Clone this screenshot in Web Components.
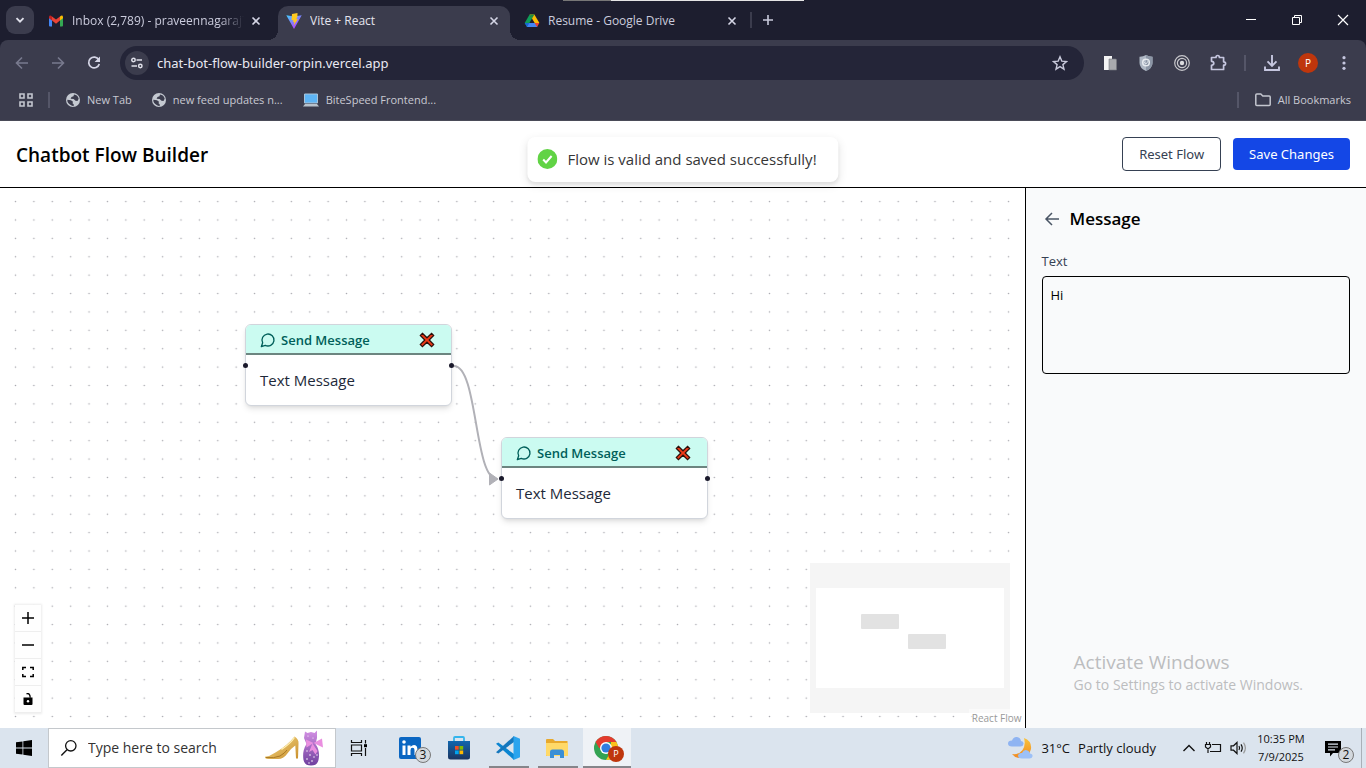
<!DOCTYPE html>
<html lang="en">
<head>
<meta charset="utf-8">
<meta name="viewport" content="width=device-width, initial-scale=1">
<title>Vite + React</title>
<style>
  html, body { margin: 0; height: 100%; }
  body { font-family: "Open Sans", "Noto Sans", sans-serif; font-size: 14px; line-height: 20px; overflow: hidden; }
</style>
</head>
<body>
<desktop-screen></desktop-screen>

<script>
const ICONS = {
  chevron: '<svg width="16" height="16" viewBox="0 0 16 16"><path d="M4.5 6.2 8 9.7l3.500-3.500" fill="none" stroke="#dfe0ea" stroke-width="1.900"/></svg>',
  gmail: '<svg width="16" height="16" viewBox="0 0 16 16"><path d="M1 4.500V12.500q0 1 1 1h2V7z" fill="#4285f4"/><path d="M15 4.500V12.500q0 1-1 1h-2V7z" fill="#34a853"/><path d="M12 3.500V7.500l3-2.200V4q-.3-2-2-1.200z" fill="#fbbc04"/><path d="M4 3.500v4L1 5.300V4q.3-2 2-1.200z" fill="#c5221f"/><path d="M4 3.400 8 6.500l4-3.100v4.200L8 10.700 4 7.600z" fill="#ea4335"/></svg>',
  vite: '<svg width="16" height="16" viewBox="0 0 16 16"><defs><linearGradient id="a" x1="0" y1="0" x2=".7" y2="1"><stop offset="0" stop-color="#41d1ff"/><stop offset="1" stop-color="#bd34fe"/></linearGradient></defs><path d="M.3 2.300 8 16 15.700 2.300 8 3.600z" fill="url(#a)"/><path d="m11.500 0-5.500 1.100-.5 6.200 1.900-.4-.5 2.200 1.500-.4-.8 3.800 4.400-6.500-1.700.3 1.100-2.600z" fill="#ffc920"/></svg>',
  drive: '<svg width="16" height="16" viewBox="0 0 16 16"><path d="M5.600 1.500h4.800L15.400 10h-4.700z" fill="#fbbc04"/><path d="M5.600 1.500 .7 10l2.300 4L8 5.600z" fill="#0f9d58"/><path d="M5.600 1.500h4.800L8 5.600z" fill="#1e8e3e"/><path d="M3.300 10h7.900l2.300 4H3z" fill="#4285f4"/><path d="M.7 10h4.700L3 14z" fill="#1967d2"/><path d="M10.600 10h4.800L13 14z" fill="#ea4335"/></svg>',
  close: '<svg width="16" height="16" viewBox="0 0 16 16"><path d="m4.500 4.500 7 7m0-7-7 7" stroke="#d5d6e6" stroke-width="1.600"/></svg>',
  plus: '<svg width="16" height="16" viewBox="0 0 16 16"><path d="M8 3v10M3 8h10" stroke="#c9cadb" stroke-width="1.600"/></svg>',
  min: '<svg width="12" height="12" viewBox="0 0 12 12"><path d="M1 5.500h10" stroke="#fff"/></svg>',
  restore: '<svg width="12" height="12" viewBox="0 0 12 12"><path d="M1.500 3.500h7v7h-7zM3.500 3V1.500h7v7H9" fill="none" stroke="#fff"/></svg>',
  winclose: '<svg width="12" height="12" viewBox="0 0 12 12"><path d="m1 1 10 10m0-10L1 11" stroke="#fff" stroke-width="1.200"/></svg>',
  back: '<svg width="16" height="16" viewBox="0 0 16 16"><path d="M14 8H3m5-5.500L2.500 8 8 13.500" fill="none" stroke="#787a8e" stroke-width="1.600"/></svg>',
  forward: '<svg width="16" height="16" viewBox="0 0 16 16"><path d="M2 8h11M8 2.500 13.500 8 8 13.500" fill="none" stroke="#787a8e" stroke-width="1.600"/></svg>',
  reload: '<svg width="16" height="16" viewBox="0 0 16 16"><path d="M12.800 4.800A5.400 5.400 0 1 0 13.300 9" fill="none" stroke="#d5d6e6" stroke-width="1.700"/><path d="M14 1.500V7H8.600z" fill="#d5d6e6"/></svg>',
  tune: '<svg width="16" height="16" viewBox="0 0 16 16"><g fill="none" stroke="#dfe0ea" stroke-width="1.500"><circle cx="4.500" cy="5" r="1.700"/><path d="M7.500 5H13M2.500 11H8"/><circle cx="11.300" cy="11" r="1.700"/></g></svg>',
  star: '<svg width="16" height="16" viewBox="0 0 16 16"><path d="m8 1.800 1.800 4.300 4.700.4-3.600 3.100 1.100 4.600L8 11.700l-4 2.500 1.100-4.600L1.500 6.500l4.700-.4z" fill="none" stroke="#c9cadb" stroke-width="1.400"/></svg>',
  pages: '<svg width="16" height="16" viewBox="0 0 16 16"><path d="M2 1h8v14H2z" fill="#f4f4f4"/><path d="M7 4h6.500q1 0 1 1v10H7z" fill="#a9aaae" stroke="#77787f" stroke-width=".6"/></svg>',
  shield: '<svg width="16" height="16" viewBox="0 0 16 16"><path d="M8 0q3 1.800 6.500 1.700V8q0 5-6.500 8-6.500-3-6.500-8V1.700Q5 1.800 8 0z" fill="#aeb7c4"/><path d="M8 0q3 1.800 6.500 1.700V8q0 5-6.500 8z" fill="#8c96a6"/><circle cx="8" cy="7.500" r="3.300" fill="none" stroke="#e7ebf0" stroke-width="1.500"/><path d="m6 7 2 2 3-4" fill="none" stroke="#d5dbe3"/></svg>',
  target: '<svg width="16" height="16" viewBox="0 0 16 16"><g fill="none" stroke="#c8c8cc" stroke-width="1.200"><circle cx="8" cy="8" r="7.300"/><circle cx="8" cy="8" r="4.600"/></g><circle cx="8" cy="8" r="2.200" fill="#dcdcdf"/></svg>',
  puzzle: '<svg width="18" height="18" viewBox="0 0 18 18"><path d="M2.500 3.500H7q0-2 1.700-2t1.700 2h4.200v4.300q2 0 2 1.700t-2 1.700v4.300H2.500v-4.200q2.300-.2 2.300-2t-2.300-2z" fill="none" stroke="#c5c6df" stroke-width="1.700" stroke-linejoin="round"/></svg>',
  download: '<svg width="18" height="18" viewBox="0 0 18 18"><path d="M9 1v10.500M4.500 7.300 9 11.800l4.500-4.500M2 12.500V16h14v-3.500" fill="none" stroke="#c5c6df" stroke-width="1.900"/></svg>',
  dots: '<svg width="16" height="16" viewBox="0 0 16 16" fill="#c5c6df"><circle cx="8" cy="2.700" r="1.600"/><circle cx="8" cy="8" r="1.600"/><circle cx="8" cy="13.300" r="1.600"/></svg>',
  apps: '<svg width="16" height="16" viewBox="0 0 16 16" fill="none" stroke="#c4c6cf" stroke-width="1.600"><path d="M2 2h4v4H2zM10 2h4v4h-4zM2 10h4v4H2zM10 10h4v4h-4z"/></svg>',
  globe: '<svg width="14" height="14" viewBox="0 0 14 14"><circle cx="7" cy="7" r="7" fill="#c4c9d1"/><path d="M1.300 6.800 5 7.200l2 1.500-.5 1.500 1.200 1v2L5.500 12.500Q1 10.500 1.300 6.800zM8 1.500q4 .6 4.700 4.300L11.500 8l-2-.3L7.600 6 4.600 5.800 5.500 4l2-.8z" fill="#3b3c4d"/></svg>',
  laptop: '<svg width="16" height="14" viewBox="0 0 16 14"><path d="M1.500 1h13v9h-13z" fill="#5db4f5" stroke="#a9c3d8"/><path d="M2 11h12l2 2.500H0z" fill="#b8c2cc"/></svg>',
  folder: '<svg width="16" height="14" viewBox="0 0 16 14"><path d="M.8 2q0-1 1-1h4l2 2h6.400q1 0 1 1v7.500q0 1-1 1H1.800q-1 0-1-1z" fill="none" stroke="#c4c6cf" stroke-width="1.500"/></svg>',
  check: '<svg width="20" height="20" viewBox="0 0 20 20"><circle cx="10" cy="10" r="10" fill="#61d345"/><path d="m5.800 10.500 2.800 3 5.600-6.500" fill="none" stroke="#fff" stroke-width="2"/></svg>',
  arrow: '<svg width="16" height="16" viewBox="0 0 16 16"><path d="M15 8H2m6-6L2 8l6 6" fill="none" stroke="#4a5565" stroke-width="1.500"/></svg>',
  bubble: '<svg width="16" height="16" viewBox="0 0 24 24"><path d="M7.900 20A9 9 0 1 0 4 16.100L2 22z" fill="none" stroke="#005f5a" stroke-width="2" stroke-linecap="round" stroke-linejoin="round"/></svg>',
  cross: '<svg width="16" height="16" viewBox="0 0 16 16"><path d="m3.400 1.300 4.600 4.500 4.600-4.500 2.100 2.100L10.200 8l4.500 4.600-2.100 2.100L8 10.200l-4.600 4.500-2.100-2.100L5.800 8 1.300 3.400z" fill="#f03a17" stroke="#2b0f0a" stroke-width="1.200"/></svg>',
  zoomin: '<svg width="12" height="12" viewBox="0 0 12 12"><path d="M6 0v12M0 6h12" stroke="#000" stroke-width="1.500"/></svg>',
  zoomout: '<svg width="12" height="12" viewBox="0 0 12 12"><path d="M0 6h12" stroke="#000" stroke-width="1.500"/></svg>',
  fit: '<svg width="12" height="12" viewBox="0 0 12 12"><path d="M4 1.500H.8v2.500M8 1.500h3.200v2.500M4 10.500H.8V8M8 10.500h3.200V8" fill="none" stroke="#000" stroke-width="1.500"/></svg>',
  lock: '<svg width="12" height="12" viewBox="0 0 12 12"><path d="M1.500 4.500h9V11q0 1-1 1h-7q-1 0-1-1z" fill="#000"/><circle cx="6" cy="8.200" r="1.200" fill="#fff"/><path d="M4.500.8q3.600-1.200 3.700 4" fill="none" stroke="#000" stroke-width="1.300"/></svg>',
  windows: '<svg width="16" height="16" viewBox="0 0 16 16"><path d="M0 2.300 6.500 1.400v6.200H0zM7.300 1.300 16 0v7.600H7.300zM0 8.400h6.500v6.200L0 13.700zM7.300 8.400H16V16l-8.700-1.300z"/></svg>',
  search: '<svg width="18" height="18" viewBox="0 0 18 18"><circle cx="10.800" cy="6.800" r="5.200" fill="none" stroke="#111" stroke-width="1.300"/><path d="M7 10.700 1.300 16.500" stroke="#111" stroke-width="1.400"/></svg>',
  shoe: '<svg width="36" height="26" viewBox="0 0 36 26"><defs><linearGradient id="g" x1="0" y1="0" x2="1" y2="1"><stop offset="0" stop-color="#f6dc8a"/><stop offset="1" stop-color="#c98f2c"/></linearGradient></defs><path d="M30.500 1.500q4.500 3 4 7L34 23.500h-2l-.7-13Q26 14 23 19q-3.500 5-9 5H4Q.5 23.800 1 21.800q5-.5 10-4Q23 11 30.500 1.500z" fill="url(#g)"/><path d="M2 22.500q8 1 14-1.500 5-3 7-6" fill="none" stroke="#9b6b19" stroke-width=".8"/><path d="M30.500 2.500q-4 6-13 12" fill="none" stroke="#fff2b8" stroke-width="1.200"/></svg>',
  dress: '<svg width="22" height="36" viewBox="0 0 22 36"><defs><linearGradient id="d" x2="0" y2="1"><stop offset="0" stop-color="#d491e4"/><stop offset="1" stop-color="#6e3f9e"/></linearGradient></defs><path d="M3 1.500 5.500 3 9 2l3.500 1L15 .5V8l-1.500 6q5 7 3 16-1 5.500-7.500 5.500T1.500 30Q0 21 4.500 14L2 8z" fill="url(#d)"/><path d="M11.500 13 4 9.500l.5 8zM11.500 13 20 8.500l1 9zM10.500 13.500 7 22l3.500-2 3 4.500 2-3.500z" fill="#ea8fe0"/><g fill="#fff"><circle cx="6" cy="6" r=".6"/><circle cx="11" cy="8" r=".6"/><circle cx="5" cy="21" r=".7"/><circle cx="8" cy="25" r=".8"/><circle cx="12" cy="27" r=".7"/><circle cx="5" cy="29" r=".8"/><circle cx="10" cy="31" r=".8"/><circle cx="15" cy="25" r=".7"/><circle cx="7" cy="33" r=".7"/></g></svg>',
  taskview: '<svg width="18" height="16" viewBox="0 0 18 16"><path d="M1.500 0v2.500h10V0M1.500 16v-2.500h10V16M1.500 5h10v6h-10z" fill="none" stroke="#111" stroke-width="1.200"/><path d="M15.500 0v3.500M15.500 8v8" stroke="#111" stroke-width="1.200"/><path d="M14 4.200h3v3h-3z"/></svg>',
  linkedin: '<svg width="22" height="22" viewBox="0 0 22 22"><rect width="22" height="22" rx="2" fill="#0a66c2"/><g fill="#fff"><path d="M3.500 8.500h3V18h-3zM8.500 8.500h3v1.300Q15 6.500 17.800 9.500q.8 1 .7 8.500h-3v-5q0-2.200-2-2.200t-2 2.400V18h-3z"/><circle cx="5" cy="5" r="1.800"/></g></svg>',
  store: '<svg width="24" height="24" viewBox="0 0 24 24"><defs><linearGradient id="s" x2="0" y2="1"><stop offset="0" stop-color="#1166ae"/><stop offset="1" stop-color="#1b3561"/></linearGradient></defs><path d="M7 6V2q0-1 1-1h8q1 0 1 1v4" fill="none" stroke="#35b5ec" stroke-width="1.800"/><path d="M1 5h22v16q0 2.500-2.500 2.500h-17Q1 23.500 1 21z" fill="url(#s)"/><path d="M8 10h3.700v3.700H8z" fill="#f25022"/><path d="M12.500 10h3.700v3.700h-3.700z" fill="#7fba00"/><path d="M8 14.500h3.700v3.700H8z" fill="#00a4ef"/><path d="M12.500 14.500h3.700v3.700h-3.700z" fill="#ffb900"/></svg>',
  vscode: '<svg width="24" height="24" viewBox="0 0 24 24"><path d="M0 7.800 2.300 6.600 18 18v6z" fill="#0b85d1"/><path d="m0 16.200 2.300 1.200L18 6V0z" fill="#1577bd"/><path d="M17.500 0 24 2.800v18.400L17.500 24z" fill="#2ba4ee"/></svg>',
  explorer: '<svg width="22" height="20" viewBox="0 0 22 20"><path d="M0 2q0-1 1-1h6l2 2h12.500v15H0z" fill="#e8a92d"/><path d="M0 5h22v12q0 1-1 1H1q-1 0-1-1z" fill="#ffd968"/><path d="M4 20v-6q0-2.500 2.500-2.500h9q2.500 0 2.500 2.500v6h-4v-3H8v3z" fill="#3a8fd6"/></svg>',
  chrome: '<svg width="24" height="24" viewBox="0 0 24 24"><circle cx="12" cy="12" r="12" fill="#34a353"/><path d="M1.600 6A12 12 0 0 1 22.400 6H12v6H5.100z" fill="#e33b2e"/><path d="M22.400 6A12 12 0 0 1 12 24l5-9V6z" fill="#fcc21b"/><circle cx="12" cy="12" r="6" fill="#fff"/><circle cx="12" cy="12" r="4.600" fill="#2f7de1"/></svg>',
  weather: '<svg width="26" height="24" viewBox="0 0 26 24"><defs><linearGradient id="m" x2="0" y2="1"><stop offset="0" stop-color="#f9c33c"/><stop offset="1" stop-color="#f08a24"/></linearGradient></defs><path d="M16 2q8 3 7 11-2 9-11 9-5 0-8-4 7 1 10.500-4T16 2z" fill="url(#m)"/><path d="M4 10.500q-4 0-4-3T4 4.500Q5.500.5 9 1t4 4q3 .5 2.500 3-.5 2.500-3 2.500z" fill="#8fb4f2"/><path d="M14 22.500q-4 0-4-3 .5-3 4-2.500 2-4 5.500-2.500 2.300 1 2.500 3 3 .5 2.500 3-.5 2-3 2z" fill="#9cc0f7"/></svg>',
  caret: '<svg width="14" height="8" viewBox="0 0 14 8"><path d="m1.500 7 5.500-5.500L12.500 7" fill="none" stroke="#111" stroke-width="1.400"/></svg>',
  power: '<svg width="18" height="14" viewBox="0 0 18 14"><path d="M8 3.500h8.500v7H6M2.500 1v2M5.500 1v2M1.500 3.500h5V6L4 8 1.500 6zM4 8v4" fill="none" stroke="#111" stroke-width="1.200"/></svg>',
  sound: '<svg width="18" height="14" viewBox="0 0 18 14"><path d="M1 4.800h2.500L7 1.500v11L3.500 9.200H1z" fill="none" stroke="#111" stroke-width="1.200"/><path d="M9 5q1.200 2 0 4M11 3.300q2.500 3.700 0 7.400" fill="none" stroke="#111" stroke-width="1.200"/><path d="M13.500 1.700q3.800 5.300 0 10.600" fill="none" stroke="#999" stroke-width="1.200"/></svg>',
  notes: '<svg width="17" height="17" viewBox="0 0 17 17"><path d="M0 1h16v12H8l-3 3.500V13H0z"/><path d="M3 4.200h10M3 7h10M3 9.800h7" stroke="#dbe4ee" stroke-width="1.200"/></svg>'
};

class UiIcon extends HTMLElement {
  connectedCallback() {
    if (this.shadowRoot) return;
    this.attachShadow({ mode: "open" }).innerHTML =
      `<style>:host{display:inline-flex;flex:none}svg{display:block}</style>${ICONS[this.getAttribute("name")] || ""}`;
  }
}
customElements.define("ui-icon", UiIcon);

const RESET = "*{box-sizing:border-box}button,input,textarea{font:inherit;color:inherit;margin:0;padding:0;border:0;background:none;outline:0}button{display:flex;align-items:center;justify-content:center}a{color:inherit;text-decoration:none}:host{box-sizing:border-box}";

function define(name, styles, markup) {
  const template = document.createElement("template");
  template.innerHTML = `<style>${RESET}${styles}</style>${markup}`;
  customElements.define(name, class extends HTMLElement {
    constructor() {
      super();
      this.attachShadow({ mode: "open" }).append(template.content.cloneNode(true));
    }
  });
}

define("browser-tab", `
  :host{display:flex;position:relative;width:232px;height:34px;align-items:center;gap:8px;padding:0 8px 4px;color:#cbccdd;border-radius:10px 10px 0 0;font-size:12px;line-height:20px}
  :host([active]){background:#3b3c4d;color:#e4e4ee}
  :host([active])::before,:host([active])::after{content:"";position:absolute;bottom:0;width:10px;height:10px}
  :host([active])::before{right:100%;background:radial-gradient(circle at 0 0,#0000 10px,#3b3c4d 10px)}
  :host([active])::after{left:100%;background:radial-gradient(circle at 100% 0,#0000 10px,#3b3c4d 10px)}
  .title{flex:1;min-width:0;overflow:hidden;white-space:nowrap;justify-content:flex-start;height:20px}
  :host([fade]) .title{margin-right:-4px;-webkit-mask-image:linear-gradient(to right,#000 86%,#0000);mask-image:linear-gradient(to right,#000 86%,#0000)}`,
  `<slot name="icon"></slot><button class="title"><slot></slot></button><button aria-label="Close tab"><ui-icon name="close"></ui-icon></button>`);

define("tab-strip", `
  :host{display:flex;position:relative;height:40px;padding:6px 0 0 6px;gap:6px;background:#1d1e2f}
  .menu{width:28px;height:28px;border-radius:9px;background:#3b3c4d}
  .rule{width:2px;height:16px;margin:6px 0 0 -4px;background:#3b3c4d}
  .add{width:28px;height:28px;margin-left:-4px}
  .grow{flex:1}
  .win{display:flex;margin-top:-6px}
  .win button{width:46px;height:40px}
  .grip{position:absolute;top:0;left:563px;width:241px;height:1px;background:linear-gradient(to right,#777 48px,#e5e5e5 48px)}`,
  `<button class="menu" aria-label="Search tabs"><ui-icon name="chevron"></ui-icon></button>
   <browser-tab fade><ui-icon slot="icon" name="gmail"></ui-icon>Inbox (2,789) - praveennagaraj7</browser-tab>
   <browser-tab active><ui-icon slot="icon" name="vite"></ui-icon>Vite + React</browser-tab>
   <browser-tab><ui-icon slot="icon" name="drive"></ui-icon>Resume - Google Drive</browser-tab>
   <span class="rule"></span>
   <button class="add" aria-label="New tab"><ui-icon name="plus"></ui-icon></button>
   <span class="grow"></span>
   <div class="win"><button aria-label="Minimize"><ui-icon name="min"></ui-icon></button><button aria-label="Restore"><ui-icon name="restore"></ui-icon></button><button aria-label="Close"><ui-icon name="winclose"></ui-icon></button></div>
   <span class="grip"></span>`);

define("address-bar", `
  :host{display:block;background:#1d1e2f}
  .bar{display:flex;align-items:center;height:46px;padding:0 4px;background:#3b3c4d;border-radius:8px 8px 0 0}
  .cell{width:36px;height:36px;display:flex;align-items:center;justify-content:center}
  .pill{flex:1;display:flex;align-items:center;gap:8px;height:34px;margin:0 8px;padding:0 16px 0 5px;border-radius:17px;background:#242538}
  .info{width:24px;height:24px;border-radius:50%;background:#3b3c4d}
  input{flex:1;min-width:0;font-family:"Noto Sans",sans-serif;font-size:13px;line-height:20px;color:#e9e9f2}
  .rule{width:2px;height:16px;margin:0 8px;background:#555668}
  .avatar{width:20px;height:20px;border-radius:50%;background:#bf360c;color:#fff;font-size:10px;line-height:20px}`,
  `<div class="bar">
    <button class="cell" aria-label="Back"><ui-icon name="back"></ui-icon></button>
    <button class="cell" aria-label="Forward"><ui-icon name="forward"></ui-icon></button>
    <button class="cell" aria-label="Reload"><ui-icon name="reload"></ui-icon></button>
    <div class="pill"><button class="info" aria-label="Site information"><ui-icon name="tune"></ui-icon></button><input aria-label="Address" value="chat-bot-flow-builder-orpin.vercel.app"><button aria-label="Bookmark this tab"><ui-icon name="star"></ui-icon></button></div>
    <button class="cell" aria-label="Pages"><ui-icon name="pages"></ui-icon></button>
    <button class="cell" aria-label="Shield"><ui-icon name="shield"></ui-icon></button>
    <button class="cell" aria-label="Target"><ui-icon name="target"></ui-icon></button>
    <button class="cell" aria-label="Extensions"><ui-icon name="puzzle"></ui-icon></button>
    <span class="rule"></span>
    <button class="cell" aria-label="Downloads"><ui-icon name="download"></ui-icon></button>
    <div class="cell"><button class="avatar">P</button></div>
    <button class="cell" aria-label="Menu"><ui-icon name="dots"></ui-icon></button>
  </div>`);

define("bookmarks-bar", `
  :host{display:flex;align-items:center;height:35px;padding:0 15px 7px 18px;background:#3b3c4d;border-bottom:1px solid #4a4b58;color:#c8c9d2;font-size:11px;line-height:20px;white-space:nowrap}
  .rule{width:2px;height:16px;background:#555668;margin:0 16px 0 14px}
  a{display:flex;align-items:center;gap:7px;margin-right:20px}
  .all{margin:0}
  .grow{flex:1}`,
  `<button aria-label="Apps"><ui-icon name="apps"></ui-icon></button><span class="rule"></span>
   <a href="#"><ui-icon name="globe"></ui-icon>New Tab</a>
   <a href="#"><ui-icon name="globe"></ui-icon>new feed updates n...</a>
   <a href="#"><ui-icon name="laptop"></ui-icon>BiteSpeed Frontend...</a>
   <span class="grow"></span><span class="rule"></span>
   <a class="all" href="#"><ui-icon name="folder"></ui-icon>All Bookmarks</a>`);

define("app-header", `
  :host{display:flex;align-items:center;justify-content:space-between;height:67px;padding:0 16px;background:#fff;border-bottom:1px solid #000}
  h1{margin:0;padding-top:2px;font-size:19px;line-height:28px;font-weight:600;color:#000}
  div{display:flex;align-items:center;gap:12px}
  button{font-family:"Noto Sans",sans-serif;font-size:13px;line-height:20px;border-radius:4px;padding:6px 16px}
  .reset{border:1px solid #364153;color:#364153}
  .save{background:#1447e6;color:#fff}`,
  `<h1>Chatbot Flow Builder</h1><div><button class="reset">Reset Flow</button><button class="save">Save Changes</button></div>`);

define("toast-message", `
  :host{display:flex;align-items:center;gap:10px;height:45px;padding:0 22px 2px 10px;border-radius:8px;background:#fff;color:#363636;font-size:15px;line-height:20px;white-space:nowrap;box-shadow:0 3px 10px rgba(0,0,0,.1),0 3px 3px rgba(0,0,0,.05)}`,
  `<ui-icon name="check"></ui-icon><span role="status"><slot></slot></span>`);

define("flow-node", `
  :host{display:block;position:absolute;width:207px;height:82px;border:1px solid #d1d5dc;border-radius:6px;background:#fff;box-shadow:0 4px 6px -1px rgba(0,0,0,.1),0 2px 4px -2px rgba(0,0,0,.1)}
  header{display:flex;align-items:center;gap:5px;height:30px;padding:2px 16px 0 14px;background:#cbfbf1;border-bottom:2px solid #6c8580;border-radius:5px 5px 0 0;color:#005f5a;font-size:13px;line-height:20px;font-weight:600}
  header span{flex:1}
  p{margin:0;padding:15px 14px;font-size:15px;line-height:20px;color:#1e2939}
  i{position:absolute;top:38px;width:5px;height:5px;border-radius:50%;background:#1a192b}
  .in{left:-3px}.out{right:-3px}`,
  `<header><ui-icon name="bubble"></ui-icon><span>Send Message</span><button aria-label="Delete node"><ui-icon name="cross"></ui-icon></button></header>
   <p><slot></slot></p><i class="in"></i><i class="out"></i>`);

define("flow-controls", `
  :host{display:flex;flex-direction:column;position:absolute;left:15px;bottom:15px;box-shadow:0 0 2px 1px rgba(0,0,0,.08)}
  button{width:26px;height:27px;background:#fefefe;border-bottom:1px solid #eee}`,
  `<button aria-label="Zoom in"><ui-icon name="zoomin"></ui-icon></button><button aria-label="Zoom out"><ui-icon name="zoomout"></ui-icon></button><button aria-label="Fit view"><ui-icon name="fit"></ui-icon></button><button aria-label="Toggle interactivity"><ui-icon name="lock"></ui-icon></button>`);

define("flow-canvas", `
  :host{display:block;position:relative;background:#fff;overflow:hidden}
  svg{display:block}
  .layer{position:absolute;inset:0;width:100%;height:100%}
  .first{left:245px;top:136px}
  .second{left:501px;top:249px}
  .map{position:absolute;right:15px;bottom:15px}
  .credit{position:absolute;right:0;bottom:0;padding:0 3px;background:rgba(255,255,255,.5);color:#999;font-size:10px;line-height:19px}`,
  `<svg class="layer" aria-hidden="true">
     <defs><pattern id="dots" width="18.390" height="18.390" x="6.300" y="4.400" patternUnits="userSpaceOnUse"><circle cx="9.200" cy="9.200" r=".8" fill="#a8a8ae"/></pattern></defs>
     <rect width="100%" height="100%" fill="url(#dots)"/>
     <path d="M454 178C478 178 474 291 497 291" fill="none" stroke="#b1b1b7" stroke-width="2"/>
     <path d="M489.500 285v12l8.500-6z" fill="#b1b1b7" stroke="#b1b1b7" stroke-linejoin="round"/>
   </svg>
   <flow-node class="first">Text Message</flow-node>
   <flow-node class="second">Text Message</flow-node>
   <svg class="map" width="200" height="150" aria-label="Mini map"><path d="M0 0h200v150H0z" fill="#f5f5f5"/><path d="M6 25h188v100H6z" fill="#fff"/><g fill="#e2e2e2"><rect x="51" y="51" width="38" height="15" rx="1"/><rect x="98" y="71" width="38" height="15" rx="1"/></g></svg>
   <flow-controls></flow-controls>
   <a class="credit" href="#">React Flow</a>`);

define("settings-panel", `
  :host{display:block;padding:16px;background:#f9fafb;border-left:1px solid #000}
  .top{display:flex;align-items:center;gap:10px;height:28px;margin-bottom:19px;padding:2px 0 0 2px}
  h2{margin:0;font-size:17px;line-height:28px;font-weight:600;color:#000}
  label{display:block;height:25px;color:#364153;font-size:13px;line-height:20px}
  textarea{display:block;width:100%;height:98px;padding:8px;border:1px solid #000;border-radius:4px;resize:none;color:#000;font-size:13px;line-height:20px}`,
  `<div class="top"><button aria-label="Back"><ui-icon name="arrow"></ui-icon></button><h2>Message</h2></div>
   <label for="text">Text</label><textarea id="text">Hi</textarea>`);

define("activation-notice", `
  :host{display:block;color:#bcbdbf;white-space:nowrap}
  strong,span{display:block;font-weight:400}
  strong{font-size:19px;line-height:26px}
  span{font-size:14px;line-height:20px}`,
  `<strong>Activate Windows</strong><span>Go to Settings to activate Windows.</span>`);

define("task-button", `
  :host{display:block;position:relative;width:48px;height:40px}
  button{width:100%;height:100%}
  :host([open]) button{box-shadow:inset 0 -2px #85858a}
  :host([open]){padding:0 4px}
  :host([focused]){padding:0;background:#eff2f6}
  ::slotted(b){position:absolute;left:28px;top:19px;width:16px;height:16px;border-radius:50%;border:1px solid #777;background:#d3d8dd;color:#111;font-size:12px;line-height:14px;font-weight:400;text-align:center;box-sizing:border-box}
  ::slotted(b.user){left:25px;top:18px;border:0;background:#bf360c;color:#fff;font-size:9px;line-height:16px}`,
  `<button><slot></slot></button><slot name="badge"></slot>`);

define("task-bar", `
  :host{display:flex;height:40px;background:#dbe4ee;color:#111;white-space:nowrap}
  .start{width:48px;height:40px}
  .search{display:flex;align-items:center;width:288px;height:40px;padding:0 11px;border:1px solid #c4c8cc;background:#fff}
  input{flex:1;min-width:0;margin-left:10px;font-size:14px;line-height:20px}
  input::placeholder{color:#333;opacity:1}
  .shoe{margin-right:2px}
  .apps{display:flex;gap:1px}
  .apps :first-child{margin-right:2px}
  .grow{flex:1}
  .weather{gap:7px;margin-right:26px;font-size:13px;line-height:20px}
  .weather span{margin-left:1px}
  .tray{display:flex;align-items:center;gap:8px;margin-right:8px}
  .clock{flex-direction:column;width:50px;margin-right:4px;font-size:11px;line-height:18px}
  .notes{width:47px;margin-right:4px}
  .end{width:5px;border-left:1px solid #a9b0b8}`,
  `<button class="start" aria-label="Start"><ui-icon name="windows"></ui-icon></button>
   <label class="search"><ui-icon name="search"></ui-icon><input placeholder="Type here to search" aria-label="Type here to search"><ui-icon class="shoe" name="shoe"></ui-icon><ui-icon name="dress"></ui-icon></label>
   <div class="apps">
     <task-button><ui-icon name="taskview"></ui-icon></task-button>
     <task-button><ui-icon name="linkedin"></ui-icon><b slot="badge">3</b></task-button>
     <task-button><ui-icon name="store"></ui-icon></task-button>
     <task-button open><ui-icon name="vscode"></ui-icon></task-button>
     <task-button open><ui-icon name="explorer"></ui-icon></task-button>
     <task-button open focused><ui-icon name="chrome"></ui-icon><b class="user" slot="badge">P</b></task-button>
   </div>
   <span class="grow"></span>
   <button class="weather"><ui-icon name="weather"></ui-icon>31°C<span>Partly cloudy</span></button>
   <div class="tray"><ui-icon name="caret"></ui-icon><ui-icon name="power"></ui-icon><ui-icon name="sound"></ui-icon></div>
   <button class="clock"><time>10:35 PM</time><time>7/9/2025</time></button>
   <task-button class="notes"><ui-icon name="notes"></ui-icon><b slot="badge">2</b></task-button>
   <span class="end"></span>`);

define("desktop-screen", `
  :host{display:flex;flex-direction:column;height:100vh}
  .app{position:relative;flex:1;min-height:0;display:flex;flex-direction:column}
  main{flex:1;min-height:0;display:grid;grid-template-columns:3fr 1fr}
  toast-message{position:absolute;top:16px;left:50%;transform:translateX(-50%)}
  activation-notice{position:absolute;right:63px;bottom:33px}`,
  `<tab-strip></tab-strip><address-bar></address-bar><bookmarks-bar></bookmarks-bar>
   <div class="app">
     <app-header></app-header>
     <main><flow-canvas></flow-canvas><settings-panel></settings-panel></main>
     <toast-message>Flow is valid and saved successfully!</toast-message>
     <activation-notice></activation-notice>
   </div>
   <task-bar></task-bar>`);
</script>
</body>
</html>
